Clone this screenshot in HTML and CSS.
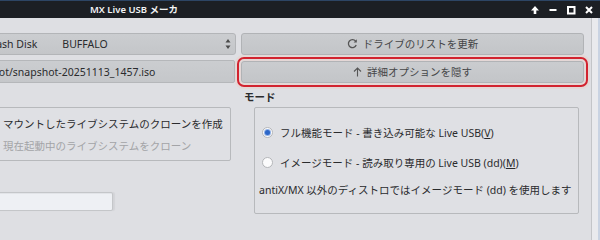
FILE: index.html
```html
<!DOCTYPE html>
<html lang="ja">
<head>
<meta charset="utf-8">
<title>MX Live USB メーカ</title>
<link rel="stylesheet" href="styles.css">
</head>
<body>
<div class="titlebar">
  <div class="title">MX Live USB メーカ</div>
  <div class="controls">
    <svg class="ctl" width="10" height="10" viewBox="0 0 10 10"><path d="M5 1 L9 5.5 H6.3 V9 H3.7 V5.5 H1 Z" fill="#fff"/></svg>
    <svg class="ctl" width="10" height="10" viewBox="0 0 10 10"><rect x="1.5" y="4" width="7" height="2" fill="#fff"/></svg>
    <svg class="ctl" width="10" height="10" viewBox="0 0 10 10"><rect x="2" y="2" width="6.5" height="6.5" fill="none" stroke="#fff" stroke-width="2"/></svg>
    <svg class="ctl" width="10" height="10" viewBox="0 0 10 10"><path d="M2 2 L8 8 M8 2 L2 8" stroke="#fff" stroke-width="2"/></svg>
  </div>
</div>
<div class="window">
  <div class="main">
    <div class="row row1">
      <div class="combo">
        <span class="dev">USB Flash Disk</span>
        <span class="vendor">BUFFALO</span>
        <svg class="spin" width="6" height="12" viewBox="0 0 6 12"><path d="M3 1 L5.5 4.5 H0.5 Z M3 11 L5.5 7.5 H0.5 Z" fill="#4a4a4a"/></svg>
      </div>
      <button class="btn">
        <svg width="11" height="11" viewBox="0 0 11 11"><path d="M8.6 3.2 A4 4 0 1 0 9.2 7" fill="none" stroke="#555" stroke-width="1.3"/><path d="M9.8 1.2 V4.4 H6.6 Z" fill="#555"/></svg>
        <span>ドライブのリストを更新</span>
      </button>
    </div>
    <div class="row row2">
      <div class="lineedit">/home/snapshot/snapshot-20251113_1457.iso</div>
      <button class="btn focus">
        <svg width="9" height="10" viewBox="0 0 9 10"><path d="M4.5 1 V9.5 M1 4.5 L4.5 1 L8 4.5" fill="none" stroke="#555" stroke-width="1.1"/></svg>
        <span>詳細オプションを隠す</span>
      </button>
    </div>
    <div class="lower">
      <div class="leftcol">
        <div class="group clone">
          <div class="cline">マウントしたライブシステムのクローンを作成</div>
          <div class="cline disabled">現在起動中のライブシステムをクローン</div>
        </div>
        <div class="field"></div>
      </div>
      <div class="rightcol">
        <div class="label">モード</div>
        <div class="group mode">
          <div class="radio-row"><span class="radio on"></span><span>フル機能モード - 書き込み可能な Live USB(<u>V</u>)</span></div>
          <div class="radio-row"><span class="radio"></span><span>イメージモード - 読み取り専用の Live USB (dd)(<u>M</u>)</span></div>
          <div class="note">antiX/MX 以外のディストロではイメージモード (dd) を使用します</div>
        </div>
      </div>
    </div>
  </div>
  <div class="edge"></div>
</div>
</body>
</html>
```
FILE: styles.css
```css
* { box-sizing: border-box; }
html, body {
  margin: 0;
  width: 600px;
  height: 240px;
  overflow: hidden;
  background: #dedfe3;
  font-family: "Noto Sans", "Noto Sans CJK JP", sans-serif;
  font-size: 10.5px;
  color: #2a2b2d;
}
.titlebar {
  height: 18px;
  background: #1c1f24;
  border-top: 1px solid #2d4564;
  display: flex;
  align-items: center;
}
.title {
  flex: 1;
  padding-left: 90px;
  color: #f2f3f5;
  font-size: 9.5px;
  font-weight: 600;
  line-height: 17px;
}
.controls {
  display: flex;
  align-items: center;
  gap: 8px;
  padding-right: 6px;
}
.ctl { display: block; }
.window {
  display: flex;
  height: 222px;
}
.main {
  width: 591px;
  flex: none;
  padding-top: 15px;
  overflow: hidden;
}
.edge {
  flex: 1;
  border-left: 1px solid #c3c5c8;
  background: linear-gradient(to right, #e9eaed 0, #e9eaed 6px, #c9d3e2 6px);
}
.row {
  display: flex;
  margin-left: -84px;
}
.row1 { height: 22px; }
.row2 { height: 23px; margin-top: 5px; }
.combo {
  width: 320px;
  flex: none;
  display: flex;
  align-items: center;
  padding-left: 48px;
  padding-right: 4px;
  background: linear-gradient(#cbcdd0, #c4c6c9);
  border: 1px solid #b3b5b8;
  border-radius: 3px;
  white-space: nowrap;
}
.vendor { margin-left: 25px; flex: 1; }
.spin { display: block; }
.btn {
  width: 343px;
  flex: none;
  margin-left: 5px;
  display: flex;
  align-items: center;
  justify-content: center;
  gap: 5px;
  font: inherit;
  color: #454648;
  background: linear-gradient(#cacccf, #c3c5c8);
  border: 1px solid #b1b3b6;
  border-radius: 3px;
  padding: 0 0 1px;
}
.btn svg { display: block; }
.focus {
  margin-left: 6px;
  margin-top: 1px;
  height: 22px;
  outline: 2px solid #d2232f;
  outline-offset: 2px;
  box-shadow: 0 0 0 6px rgba(240, 200, 190, 0.35);
}
.lineedit {
  width: 319px;
  flex: none;
  display: flex;
  align-items: center;
  padding-left: 10px;
  background: linear-gradient(#cbcdd0, #c5c7ca);
  border: 1px solid #b5b7ba;
  border-radius: 2px;
  white-space: nowrap;
  overflow: hidden;
}
.lower {
  display: flex;
  margin-top: 6px;
  margin-left: -84px;
}
.leftcol {
  width: 315px;
  flex: none;
  padding-top: 18px;
}
.group {
  border: 1px solid #b7b9bc;
  border-radius: 2px;
  background: #dfe0e4;
}
.clone {
  width: 315px;
  height: 54px;
  padding: 7px 0 0 86px;
  display: flex;
  flex-direction: column;
  gap: 4px;
}
.cline { height: 18px; line-height: 18px; white-space: nowrap; }
.disabled { color: #a3a4a7; }
.field {
  width: 197px;
  height: 19px;
  margin-top: 31px;
  background: #eef0f4;
  border: 1px solid #c4c6c9;
  border-radius: 2px;
  box-shadow: inset 0 1px 0 #e2e4e8, 2px 0 1px rgba(0,0,0,0.05);
}
.rightcol {
  margin-left: 10px;
}
.label {
  height: 18px;
  line-height: 16px;
  padding-left: 3px;
  font-weight: 700;
  color: #2a2b2d;
}
.mode {
  width: 325px;
  height: 107px;
  margin-left: 13px;
  padding: 14px 0 0 4px;
  display: flex;
  flex-direction: column;
}
.radio-row {
  height: 20px;
  display: flex;
  align-items: center;
  gap: 7px;
  padding-left: 3px;
  white-space: nowrap;
}
.radio-row + .radio-row { margin-top: 10px; }
.radio {
  width: 11px;
  height: 11px;
  border-radius: 50%;
  border: 1px solid #b4b6b9;
  background: #fbfbfc;
  display: flex;
  align-items: center;
  justify-content: center;
}
.radio.on::after {
  content: "";
  width: 5px;
  height: 5px;
  border-radius: 50%;
  background: #2c66c8;
  box-shadow: 0 0 0 1px #8fb0e6;
}
.note {
  height: 20px;
  line-height: 20px;
  margin-top: 8px;
  white-space: nowrap;
}
u { text-underline-offset: 1px; }
```
